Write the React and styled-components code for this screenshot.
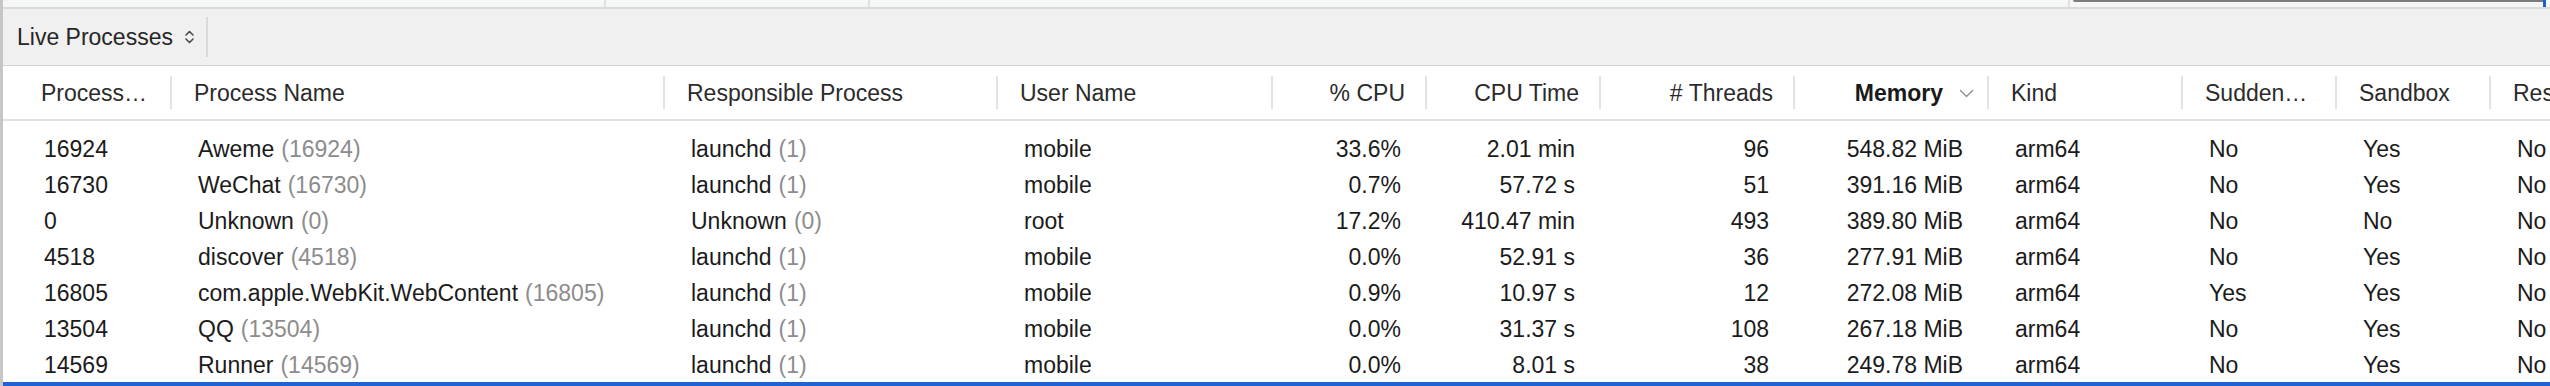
import React from 'react'
import styled, { createGlobalStyle } from 'styled-components'

const GlobalStyle = createGlobalStyle`
  html, body {
    margin: 0;
    padding: 0;
    background: #ffffff;
  }
  body {
    font-family: "Liberation Sans", Arial, sans-serif;
  }
`

const COLUMNS = '169px 493px 333px 275px 154px 174px 194px 194px 194px 154px 154px 200px'

const Window = styled.div`
  width: 2550px;
  height: 386px;
  box-sizing: border-box;
  overflow: hidden;
  display: flex;
  flex-direction: column;
  border-left: 3px solid #c6c6c6;
  background: #ffffff;
`

const TopStrip = styled.div`
  height: 7px;
  flex-shrink: 0;
  display: flex;
  background: #f5f6f6;
  border-bottom: 2px solid #dadada;
`

const StripSegment = styled.div`
  width: ${p => p.$w}px;
  flex-shrink: 0;
  border-right: 2px solid #e1e1e1;
`

const Scrubber = styled.div`
  flex: 1;
  display: flex;
  align-items: flex-start;
  padding-left: 3px;
`

const ScrubberTrack = styled.div`
  width: 470px;
  height: 2px;
  background: #7b7b7b;
  border-bottom-left-radius: 2px;
`

const PlayHead = styled.div`
  width: 3px;
  height: 7px;
  background: #1b5fd1;
`

const Toolbar = styled.div`
  height: 56px;
  flex-shrink: 0;
  display: flex;
  align-items: center;
  padding-left: 14px;
  background: #f0f0f0;
  border-bottom: 1px solid #d4d4d4;
`

const ScopePopup = styled.div`
  display: flex;
  align-items: center;
  gap: 11px;
  height: 40px;
  padding-right: 11px;
  border-right: 2px solid #d9d9d9;
  font-size: 23px;
  color: #262626;
`

const HeaderRow = styled.div`
  display: grid;
  grid-template-columns: ${COLUMNS};
  height: 53px;
  flex-shrink: 0;
  border-bottom: 2px solid #e2e2e2;
`

const HeaderCell = styled.div`
  position: relative;
  display: flex;
  align-items: center;
  justify-content: ${p => (p.$right ? 'flex-end' : 'flex-start')};
  gap: 16px;
  padding: 2px ${p => p.$pr ?? 22}px 0 ${p => p.$pl ?? 22}px;
  font-size: 23px;
  font-weight: ${p => (p.$sorted ? 700 : 400)};
  color: ${p => (p.$sorted ? '#1a1a1a' : '#2b2b2b')};
  white-space: nowrap;
  overflow: hidden;

  &::after {
    content: '';
    position: absolute;
    right: 0;
    top: 10px;
    bottom: 10px;
    width: 2px;
    background: #e3e3e3;
  }
`

const Body = styled.div`
  padding-top: 9px;
  flex: 1;
`

const Row = styled.div`
  display: grid;
  grid-template-columns: ${COLUMNS};
  height: 36px;
`

const Cell = styled.div`
  display: flex;
  align-items: center;
  justify-content: ${p => (p.$right ? 'flex-end' : 'flex-start')};
  padding: 3px 26px 0 ${p => p.$pl ?? 26}px;
  font-size: 23px;
  color: #1b1b1b;
  white-space: nowrap;
  overflow: hidden;
`

const Pid = styled.span`
  color: #8c8c8c;
  margin-left: 7px;
`

const FocusLine = styled.div`
  height: 4px;
  flex-shrink: 0;
  background: #1f63d2;
`

function UpDownIcon() {
  return (
    <svg width="11" height="16" viewBox="0 0 11 16" fill="none" stroke="#4a4a4a" strokeWidth="1.6" strokeLinecap="round" strokeLinejoin="round">
      <path d="M2 6 L5.5 2.5 L9 6" />
      <path d="M2 10 L5.5 13.5 L9 10" />
    </svg>
  )
}

function SortChevron() {
  return (
    <svg width="15" height="9" viewBox="0 0 15 9" fill="none" stroke="#8e8e8e" strokeWidth="1.4" strokeLinecap="round" strokeLinejoin="round">
      <path d="M1.5 1.5 L7.5 7.5 L13.5 1.5" />
    </svg>
  )
}

const rows = [
  { pid: '16924', name: 'Aweme', resp: 'launchd', respPid: '1', user: 'mobile', cpu: '33.6%', time: '2.01 min', threads: '96', mem: '548.82 MiB', sudden: 'No', sandbox: 'Yes' },
  { pid: '16730', name: 'WeChat', resp: 'launchd', respPid: '1', user: 'mobile', cpu: '0.7%', time: '57.72 s', threads: '51', mem: '391.16 MiB', sudden: 'No', sandbox: 'Yes' },
  { pid: '0', name: 'Unknown', resp: 'Unknown', respPid: '0', user: 'root', cpu: '17.2%', time: '410.47 min', threads: '493', mem: '389.80 MiB', sudden: 'No', sandbox: 'No' },
  { pid: '4518', name: 'discover', resp: 'launchd', respPid: '1', user: 'mobile', cpu: '0.0%', time: '52.91 s', threads: '36', mem: '277.91 MiB', sudden: 'No', sandbox: 'Yes' },
  { pid: '16805', name: 'com.apple.WebKit.WebContent', resp: 'launchd', respPid: '1', user: 'mobile', cpu: '0.9%', time: '10.97 s', threads: '12', mem: '272.08 MiB', sudden: 'Yes', sandbox: 'Yes' },
  { pid: '13504', name: 'QQ', resp: 'launchd', respPid: '1', user: 'mobile', cpu: '0.0%', time: '31.37 s', threads: '108', mem: '267.18 MiB', sudden: 'No', sandbox: 'Yes' },
  { pid: '14569', name: 'Runner', resp: 'launchd', respPid: '1', user: 'mobile', cpu: '0.0%', time: '8.01 s', threads: '38', mem: '249.78 MiB', sudden: 'No', sandbox: 'Yes' },
]

export default function App() {
  return (
    <>
      <GlobalStyle />
      <Window>
        <TopStrip>
          <StripSegment $w={601} />
          <StripSegment $w={262} />
          <StripSegment $w={1198} />
          <Scrubber>
            <ScrubberTrack />
            <PlayHead />
          </Scrubber>
        </TopStrip>

        <Toolbar>
          <ScopePopup>
            Live Processes
            <UpDownIcon />
          </ScopePopup>
        </Toolbar>

        <HeaderRow>
          <HeaderCell $pl={38}>Process…</HeaderCell>
          <HeaderCell>Process Name</HeaderCell>
          <HeaderCell>Responsible Process</HeaderCell>
          <HeaderCell>User Name</HeaderCell>
          <HeaderCell $right>% CPU</HeaderCell>
          <HeaderCell $right>CPU Time</HeaderCell>
          <HeaderCell $right># Threads</HeaderCell>
          <HeaderCell $right $sorted $pr={15}>
            Memory
            <SortChevron />
          </HeaderCell>
          <HeaderCell>Kind</HeaderCell>
          <HeaderCell>Sudden…</HeaderCell>
          <HeaderCell>Sandbox</HeaderCell>
          <HeaderCell>Restricted</HeaderCell>
        </HeaderRow>

        <Body>
          {rows.map(r => (
            <Row key={r.pid}>
              <Cell $pl={41}>{r.pid}</Cell>
              <Cell>{r.name}<Pid>({r.pid})</Pid></Cell>
              <Cell>{r.resp}<Pid>({r.respPid})</Pid></Cell>
              <Cell>{r.user}</Cell>
              <Cell $right>{r.cpu}</Cell>
              <Cell $right>{r.time}</Cell>
              <Cell $right>{r.threads}</Cell>
              <Cell $right>{r.mem}</Cell>
              <Cell>arm64</Cell>
              <Cell>{r.sudden}</Cell>
              <Cell>{r.sandbox}</Cell>
              <Cell>No</Cell>
            </Row>
          ))}
        </Body>

        <FocusLine />
      </Window>
    </>
  )
}
